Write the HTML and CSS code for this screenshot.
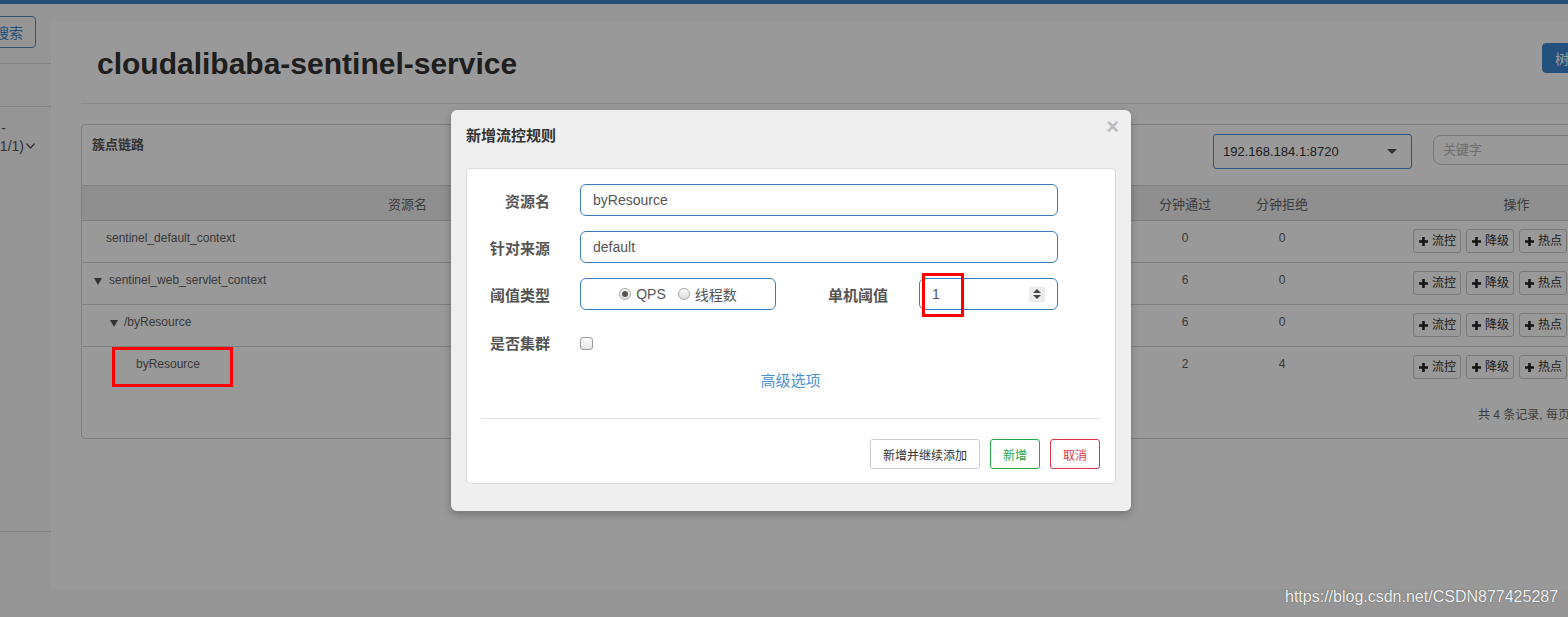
FILE: index.html
```html
<!DOCTYPE html>
<html lang="zh-CN">
<head>
<meta charset="utf-8">
<title>Sentinel 簇点链路</title>
<link rel="stylesheet" href="styles.css">
</head>
<body>
<div class="topbar"></div>
<div class="layout">
  <aside class="sidebar">
    <div class="side-top"><button class="side-btn">搜索</button></div>
    <div class="side-item"></div>
    <div class="side-app">
      <div class="side-line side-line1">-</div>
      <div class="side-line side-line2">(1/1)<svg class="chev" width="9" height="6" viewBox="0 0 9 6"><polyline points="0.5,0.5 4.5,5 8.5,0.5" fill="none" stroke="#555" stroke-width="1.2"/></svg></div>
    </div>
  </aside>
  <main class="content">
    <div class="page-head">
      <h1 class="page-title">cloudalibaba-sentinel-service</h1>
      <button class="btn-tree">树状视图</button>
    </div>
    <section class="panel">
      <div class="panel-head">
        <span class="panel-title">簇点链路</span>
        <div class="tools">
          <div class="select"><span>192.168.184.1:8720</span><span class="caret"></span></div>
          <div class="kw">关键字</div>
        </div>
      </div>
      <div class="grid thead">
        <div>资源名</div><div>通过QPS</div><div>拒绝QPS</div><div>并发数</div><div>平均RT</div><div>分钟通过</div><div>分钟拒绝</div><div>操作</div>
      </div>
      <div class="grid trow">
        <div class="name lv0leaf">sentinel_default_context</div>
        <div class="num"></div><div class="num"></div><div class="num"></div><div class="num"></div>
        <div class="num">0</div><div class="num">0</div>
        <div class="ops"><span class="op"><svg class="plus" width="9" height="9" viewBox="0 0 9 9"><path d="M4.5 0V9M0 4.5H9"/></svg>流控</span><span class="op"><svg class="plus" width="9" height="9" viewBox="0 0 9 9"><path d="M4.5 0V9M0 4.5H9"/></svg>降级</span><span class="op"><svg class="plus" width="9" height="9" viewBox="0 0 9 9"><path d="M4.5 0V9M0 4.5H9"/></svg>热点</span><span class="op"><svg class="plus" width="9" height="9" viewBox="0 0 9 9"><path d="M4.5 0V9M0 4.5H9"/></svg>授权</span></div>
      </div>
      <div class="grid trow">
        <div class="name lv0"><span class="tri"></span>sentinel_web_servlet_context</div>
        <div class="num"></div><div class="num"></div><div class="num"></div><div class="num"></div>
        <div class="num">6</div><div class="num">0</div>
        <div class="ops"><span class="op"><svg class="plus" width="9" height="9" viewBox="0 0 9 9"><path d="M4.5 0V9M0 4.5H9"/></svg>流控</span><span class="op"><svg class="plus" width="9" height="9" viewBox="0 0 9 9"><path d="M4.5 0V9M0 4.5H9"/></svg>降级</span><span class="op"><svg class="plus" width="9" height="9" viewBox="0 0 9 9"><path d="M4.5 0V9M0 4.5H9"/></svg>热点</span><span class="op"><svg class="plus" width="9" height="9" viewBox="0 0 9 9"><path d="M4.5 0V9M0 4.5H9"/></svg>授权</span></div>
      </div>
      <div class="grid trow">
        <div class="name lv1"><span class="tri"></span>/byResource</div>
        <div class="num"></div><div class="num"></div><div class="num"></div><div class="num"></div>
        <div class="num">6</div><div class="num">0</div>
        <div class="ops"><span class="op"><svg class="plus" width="9" height="9" viewBox="0 0 9 9"><path d="M4.5 0V9M0 4.5H9"/></svg>流控</span><span class="op"><svg class="plus" width="9" height="9" viewBox="0 0 9 9"><path d="M4.5 0V9M0 4.5H9"/></svg>降级</span><span class="op"><svg class="plus" width="9" height="9" viewBox="0 0 9 9"><path d="M4.5 0V9M0 4.5H9"/></svg>热点</span><span class="op"><svg class="plus" width="9" height="9" viewBox="0 0 9 9"><path d="M4.5 0V9M0 4.5H9"/></svg>授权</span></div>
      </div>
      <div class="grid trow last">
        <div class="name lv2leaf">byResource</div>
        <div class="num"></div><div class="num"></div><div class="num"></div><div class="num"></div>
        <div class="num">2</div><div class="num">4</div>
        <div class="ops"><span class="op"><svg class="plus" width="9" height="9" viewBox="0 0 9 9"><path d="M4.5 0V9M0 4.5H9"/></svg>流控</span><span class="op"><svg class="plus" width="9" height="9" viewBox="0 0 9 9"><path d="M4.5 0V9M0 4.5H9"/></svg>降级</span><span class="op"><svg class="plus" width="9" height="9" viewBox="0 0 9 9"><path d="M4.5 0V9M0 4.5H9"/></svg>热点</span><span class="op"><svg class="plus" width="9" height="9" viewBox="0 0 9 9"><path d="M4.5 0V9M0 4.5H9"/></svg>授权</span></div>
      </div>
      <div class="pager">共 4 条记录, 每页 16 条记录, 第 1 / 1 页</div>
    </section>
  </main>
</div>

<div class="backdrop"></div>

<div class="modal">
  <div class="modal-title">新增流控规则</div>
  <span class="close">×</span>
  <div class="card">
    <div class="frow">
      <label class="flabel">资源名</label>
      <div class="finput wide">byResource</div>
    </div>
    <div class="frow">
      <label class="flabel">针对来源</label>
      <div class="finput wide">default</div>
    </div>
    <div class="frow">
      <label class="flabel">阈值类型</label>
      <div class="radios">
        <span class="radio checked"></span><span class="rtext">QPS</span>
        <span class="radio"></span><span class="rtext">线程数</span>
      </div>
      <label class="flabel flabel2">单机阈值</label>
      <div class="finput numinput"><span>1</span><span class="spin"><span class="up"></span><span class="down"></span></span></div>
    </div>
    <div class="frow frow4">
      <label class="flabel">是否集群</label>
      <span class="checkbox"></span>
    </div>
    <div class="adv">高级选项</div>
    <div class="sep"></div>
    <div class="actions">
      <button class="mbtn">新增并继续添加</button>
      <button class="mbtn green">新增</button>
      <button class="mbtn red">取消</button>
    </div>
  </div>
</div>

<div class="mark mark1"></div>
<div class="mark mark2"></div>
<div class="watermark">https://blog.csdn.net/CSDN877425287</div>
</body>
</html>
```

FILE: styles.css
```css
* { box-sizing: border-box; }
html, body { margin: 0; padding: 0; }
body {
  width: 1568px;
  height: 617px;
  overflow: hidden;
  position: relative;
  background: #f8f8f8;
  font-family: "Liberation Sans", "Noto Sans CJK SC", sans-serif;
  font-size: 12px;
  color: #333;
}
button { font-family: inherit; cursor: pointer; }

.topbar { height: 4px; background: #3a80c3; }
.layout { display: flex; height: 613px; }

/* sidebar */
.sidebar { width: 51px; flex-shrink: 0; overflow: hidden; background: #f8f8f8; }
.side-top {
  height: 60px;
  border-bottom: 1px solid #dcdcdc;
  display: flex;
  justify-content: flex-end;
  align-items: flex-start;
  padding: 12px 15px 0 0;
}
.side-btn {
  flex-shrink: 0;
  height: 32px;
  padding: 0 12px;
  border: 1px solid #5b8fc7;
  border-radius: 4px;
  background: transparent;
  color: #3c82c8;
  font-size: 14px;
  white-space: nowrap;
}
.side-item { height: 43px; border-bottom: 1px solid #dcdcdc; }
.side-app { height: 425px; border-bottom: 1px solid #dcdcdc; padding-top: 12px; }
.side-line {
  display: flex;
  justify-content: flex-end;
  align-items: center;
  white-space: nowrap;
  font-size: 14px;
  line-height: 18px;
  color: #555;
}
.side-line1 { padding-right: 45px; }
.side-line2 { padding-right: 16px; }
.chev { margin-left: 2px; flex-shrink: 0; }

/* content */
.content {
  flex-shrink: 0;
  width: 1652px;
  height: 568px;
  margin-top: 17px;
  padding-left: 30px;
  background: #fff;
}
.page-head {
  height: 83px;
  border-bottom: 1px solid #e6e6e6;
  display: flex;
  align-items: flex-start;
}
.page-title {
  margin: 26px 0 0 16px;
  font-size: 30px;
  line-height: 34px;
  font-weight: 700;
  color: #333;
}
.btn-tree {
  margin: 22px 79px 0 auto;
  height: 30px;
  padding: 0 12px;
  border: 1px solid #3a87d0;
  border-radius: 4px;
  background: #3a87d0;
  color: #fff;
  font-size: 14px;
}

.panel {
  margin-top: 20px;
  width: 1622px;
  height: 315px;
  border: 1px solid #d6d6d6;
  border-radius: 4px;
}
.panel-head {
  height: 61px;
  border-bottom: 1px solid #d6d6d6;
  display: flex;
  align-items: flex-start;
}
.panel-title {
  padding: 11px 0 0 10px;
  font-size: 13px;
  line-height: 17px;
  font-weight: 700;
  color: #555;
}
.tools { margin-left: auto; display: flex; gap: 21px; padding-right: 15px; align-items: flex-start; }
.select {
  margin-top: 9px;
  width: 199px;
  height: 35px;
  border: 1px solid #4a8fd6;
  border-radius: 3px;
  display: flex;
  align-items: center;
  justify-content: space-between;
  padding: 0 14px 0 9px;
  font-size: 13px;
  color: #333;
}
.caret {
  width: 0; height: 0;
  border-left: 5px solid transparent;
  border-right: 5px solid transparent;
  border-top: 5px solid #555;
}
.kw {
  margin-top: 10px;
  width: 254px;
  height: 30px;
  border: 1px solid #c8c8c8;
  border-radius: 8px;
  padding-left: 9px;
  font-size: 13px;
  line-height: 28px;
  color: #b5b5b5;
}

.grid {
  display: grid;
  grid-template-columns: 651px 101px 101px 101px 101px 96px 98px 371px;
}
.thead {
  height: 35px;
  background: #eeeff1;
  border-bottom: 1px solid #d6d6d6;
  align-items: center;
  text-align: center;
  font-size: 13px;
  color: #666;
}
.trow { height: 42px; border-bottom: 1px solid #d6d6d6; color: #616161; }
.trow.last { border-bottom: 0; }
.trow > div { line-height: 17px; padding-top: 9px; white-space: nowrap; }
.num { text-align: center; }
.name { display: flex; align-items: center; align-self: start; }
.lv0leaf { padding-left: 24px; }
.lv0 { padding-left: 12px; }
.lv0 .tri { margin-right: 7px; }
.lv1 { padding-left: 28px; }
.lv1 .tri { margin-right: 6px; }
.lv2leaf { padding-left: 54px; }
.tri {
  display: inline-block;
  width: 0; height: 0;
  border-left: 4px solid transparent;
  border-right: 4px solid transparent;
  border-top: 7px solid #555;
  margin-top: 2px;
}
.trow > .ops { display: flex; justify-content: center; gap: 5px; padding-top: 8px; }
.op {
  flex-shrink: 0;
  display: inline-flex;
  align-items: center;
  gap: 4px;
  height: 24px;
  padding: 0 4px 0 5px;
  border: 1px solid #ccc;
  border-radius: 3px;
  background: #fff;
  font-size: 12px;
  color: #333;
}
.plus path { stroke: #222; stroke-width: 2.6; fill: none; }

.pager {
  padding: 18px 0 0 1396px;
  line-height: 17px;
  font-size: 12px;
  color: #666;
  white-space: nowrap;
}

/* overlay */
.backdrop { position: absolute; inset: 0; background: rgba(0, 0, 0, 0.4); }

.modal {
  position: absolute;
  left: 451px;
  top: 110px;
  width: 680px;
  height: 401px;
  padding: 0 15px;
  background: #efefef;
  border-radius: 6px;
  box-shadow: 0 3px 9px rgba(0, 0, 0, 0.25);
}
.modal-title {
  padding-top: 15px;
  margin-bottom: 21px;
  line-height: 22px;
  font-size: 15px;
  font-weight: 700;
  color: #333;
}
.close {
  position: absolute;
  right: 12px;
  top: 4px;
  font-size: 22px;
  line-height: 26px;
  font-weight: 700;
  color: #bdbdbd;
}
.card {
  height: 316px;
  background: #fff;
  border: 1px solid #dcdcdc;
  border-radius: 4px;
  padding: 15px 15px 14px 14px;
}
.frow { display: flex; align-items: center; height: 32px; }
.frow + .frow { margin-top: 15px; }
.frow.frow4 { margin-top: 16px; }
.flabel {
  width: 69px;
  margin-right: 30px;
  padding-top: 3px;
  text-align: right;
  font-size: 15px;
  line-height: 20px;
  font-weight: 700;
  color: #555;
  white-space: nowrap;
  flex-shrink: 0;
}
.flabel2 { width: 112px; margin-right: 31px; }
.finput {
  height: 32px;
  border: 1px solid #3a7cc0;
  border-radius: 6px;
  padding: 0 12px;
  font-size: 14px;
  line-height: 30px;
  color: #555;
}
.finput.wide { width: 478px; }
.radios {
  width: 196px;
  height: 32px;
  border: 1px solid #3a7cc0;
  border-radius: 6px;
  display: flex;
  justify-content: center;
  align-items: center;
  font-size: 14px;
  color: #555;
  flex-shrink: 0;
}
.radio {
  width: 12px;
  height: 12px;
  border-radius: 50%;
  border: 1px solid #a8a8a8;
  background: linear-gradient(#fafafa, #dedede);
  margin-right: 5px;
  display: flex;
  align-items: center;
  justify-content: center;
}
.radio.checked::after {
  content: "";
  width: 6px;
  height: 6px;
  border-radius: 50%;
  background: #555;
}
.rtext + .radio { margin-left: 12px; }
.numinput {
  width: 139px;
  display: flex;
  align-items: center;
  padding: 0 12px 0 12px;
  flex-shrink: 0;
}
.spin {
  margin-left: auto;
  width: 16px;
  height: 15px;
  background: #ebebeb;
  display: flex;
  flex-direction: column;
  align-items: center;
  justify-content: center;
  gap: 2px;
}
.up, .down { width: 0; height: 0; border-left: 4px solid transparent; border-right: 4px solid transparent; }
.up { border-bottom: 4px solid #444; }
.down { border-top: 4px solid #444; }
.checkbox {
  width: 13px;
  height: 13px;
  border: 1px solid #9a9a9a;
  border-radius: 3px;
  background: linear-gradient(#fdfdfd, #e4e4e4);
  margin-top: 2px;
}
.adv {
  margin-top: 13px;
  text-align: center;
  font-size: 15px;
  line-height: 20px;
  color: #4a8fd0;
}
.sep { margin-top: 27px; border-top: 1px solid #e5e5e5; }
.actions { margin-top: 20px; display: flex; justify-content: flex-end; gap: 10px; }
.mbtn {
  height: 30px;
  padding: 0 12px;
  border: 1px solid #ccc;
  border-radius: 3px;
  background: #fff;
  font-size: 12px;
  color: #333;
}
.mbtn.green { border-color: #28a745; color: #28a745; }
.mbtn.red { border-color: #dc3545; color: #dc3545; }

/* annotations */
.mark { position: absolute; border: 3px solid #ff0000; }
.mark1 { left: 112px; top: 347px; width: 121px; height: 40px; }
.mark2 { left: 922px; top: 273px; width: 42px; height: 44px; }

.watermark {
  position: absolute;
  left: 1285px;
  top: 588px;
  font-size: 16px;
  line-height: 18px;
  color: #f2f2f2;
  text-shadow: 0 0 1px rgba(0, 0, 0, 0.55);
  white-space: nowrap;
}
```
